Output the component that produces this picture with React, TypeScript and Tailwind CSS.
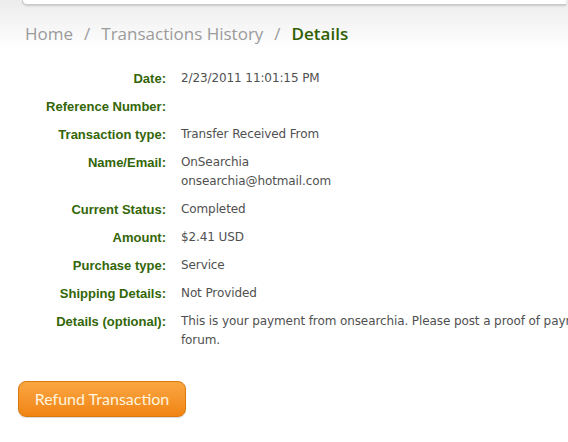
import React from "react";

const rows: { label: string; value: React.ReactNode }[] = [
  { label: "Date:", value: "2/23/2011 11:01:15 PM" },
  { label: "Reference Number:", value: "" },
  { label: "Transaction type:", value: "Transfer Received From" },
  {
    label: "Name/Email:",
    value: (
      <>
        OnSearchia
        <br />
        onsearchia@hotmail.com
      </>
    ),
  },
  { label: "Current Status:", value: "Completed" },
  { label: "Amount:", value: "$2.41 USD" },
  { label: "Purchase type:", value: "Service" },
  { label: "Shipping Details:", value: "Not Provided" },
  {
    label: "Details (optional):",
    value: (
      <>
        <span className="whitespace-nowrap">
          This is your payment from onsearchia. Please post a proof of payment in our
        </span>
        <br />
        forum.
      </>
    ),
  },
];

export default function App() {
  return (
    <div className="h-[442px] w-full overflow-hidden bg-white">
      <div className="bg-gradient-to-b from-[#ececec] to-white">
        {/* top panel edge */}
        <div className="ml-[22px] mr-[2px] h-[5px] rounded-bl-[8px] border-b border-l border-[#c9c9c9] bg-white shadow-[0_1px_2px_rgba(0,0,0,0.15)]" />
        <nav className="mt-[17px] flex items-center pb-[4px] pl-[25px] font-['Open_Sans',sans-serif] text-[17px] leading-[24px] text-[#9b9b9b]">
          <span>Home</span>
          <span className="mx-[11px]">/</span>
          <span>Transactions History</span>
          <span className="mx-[11px]">/</span>
          <span className="font-semibold text-[#2f5f00]">Details</span>
        </nav>
      </div>

      <div className="mt-[19px] grid grid-cols-[166px_1fr] gap-x-[15px] gap-y-[9px] leading-[19px]">
        {rows.map((r) => (
          <React.Fragment key={r.label}>
            <div className="text-right font-['Liberation_Sans',sans-serif] text-[13px] font-bold text-[#336608]">
              {r.label}
            </div>
            <div className="min-h-[19px] font-['DejaVu_Sans',sans-serif] text-[12px] tracking-[-0.1px] text-[#505050]">
              {r.value}
            </div>
          </React.Fragment>
        ))}
      </div>

      <button className="ml-[18px] mt-[31px] flex h-[36px] w-[168px] items-center justify-center rounded-[8px] border border-[#d9780c] bg-gradient-to-b from-[#fba640] to-[#f08410] font-['Lato',sans-serif] text-[16px] text-[#fff4dc] shadow-[0_1px_1px_rgba(0,0,0,0.15)]">
        Refund Transaction
      </button>
    </div>
  );
}
